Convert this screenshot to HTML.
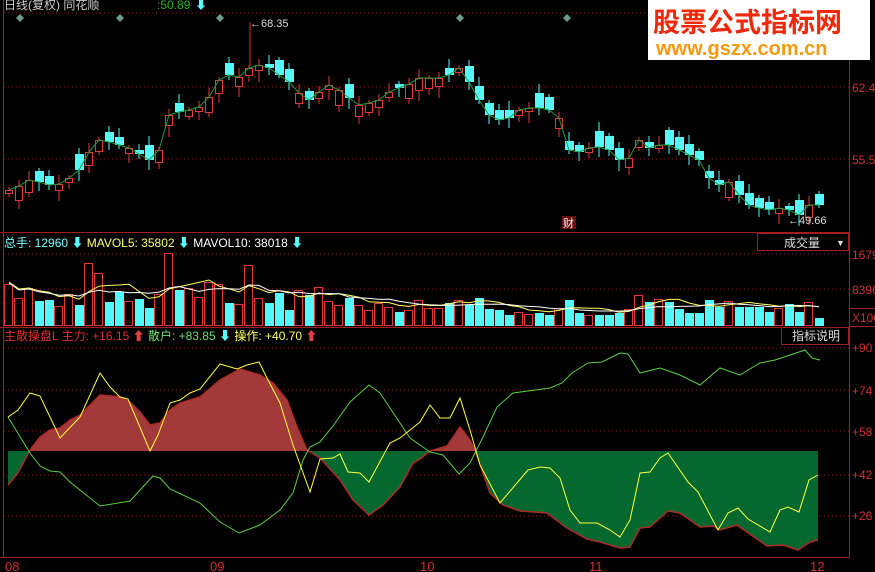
<!DOCTYPE html>
<html><head><meta charset="utf-8"><style>
html,body{margin:0;padding:0;background:#000;width:875px;height:572px;overflow:hidden}
svg{display:block}
text{font-family:"Liberation Sans","Noto Sans CJK SC",sans-serif}
</style></head><body>
<svg id="s" width="875" height="572" viewBox="0 0 875 572" xmlns="http://www.w3.org/2000/svg">
<defs>
<clipPath id="up"><rect x="0" y="300" width="849" height="151"/></clipPath>
<clipPath id="dn"><rect x="0" y="451" width="849" height="110"/></clipPath>
</defs>
<g id="grid" stroke="#8a1a1a" stroke-dasharray="1,3" stroke-width="1">
<line x1="4" y1="13" x2="849" y2="13"/>
<line x1="4" y1="87" x2="849" y2="87"/>
<line x1="4" y1="159" x2="849" y2="159"/>
<line x1="4" y1="254" x2="849" y2="254"/>
<line x1="4" y1="289" x2="849" y2="289"/>
<line x1="4" y1="348" x2="849" y2="348"/>
<line x1="4" y1="390" x2="849" y2="390"/>
<line x1="4" y1="431" x2="849" y2="431"/>
<line x1="4" y1="475" x2="849" y2="475"/>
<line x1="4" y1="516" x2="849" y2="516"/>
</g>
<g stroke="#a01e1e" stroke-width="1" fill="none">
<line x1="849.5" y1="0" x2="849.5" y2="558"/>
<line x1="3.5" y1="0" x2="3.5" y2="558"/>
<line x1="0" y1="232.5" x2="849" y2="232.5"/>
<line x1="0" y1="327.5" x2="849" y2="327.5"/>
<line x1="0" y1="557.5" x2="849" y2="557.5"/>
<rect x="757.5" y="233.5" width="91" height="17"/>
<rect x="781.5" y="327.5" width="67" height="17"/>
<rect x="849.5" y="308.5" width="30" height="18"/>
</g>
<g fill="#6a9a8a"><path d="M20 14l4 4-4 4-4-4z"/><path d="M120 14l4 4-4 4-4-4z"/><path d="M220 14l4 4-4 4-4-4z"/><path d="M460 14l4 4-4 4-4-4z"/><path d="M567 14l4 4-4 4-4-4z"/></g>
<g id="candles"></g>
<g id="vol"></g>
<g id="ind"></g>
<line x1="250" y1="22" x2="250" y2="66" stroke="#d03030"/>
<text x="250" y="27" fill="#ddd" font-size="11">←68.35</text>
<text x="788" y="224" fill="#ddd" font-size="11">←49.66</text>
<rect x="562" y="216" width="14" height="13" fill="#6a1010"/><text x="563" y="227" fill="#eee" font-size="11">财</text>
<text x="4" y="9" fill="#ccc" font-size="12">日线(复权) 同花顺</text>
<text x="157" y="9" fill="#2bb52b" font-size="12">:50.89</text><text x="195" y="9" fill="#5ff" font-size="12">⬇</text>
<rect x="648" y="0" width="222" height="60" fill="#fff"/>
<text x="653" y="32" fill="#f0280a" font-size="27" font-weight="bold" font-family="Noto Sans CJK SC,sans-serif">股票公式指标网</text>
<text x="656" y="55" fill="#f39a10" font-size="20" font-weight="bold">www.gszx.com.cn</text>
<g font-size="12" fill="#d03030">
<text x="852" y="92">62.4</text><text x="852" y="164">55.5</text>
<text x="852" y="259">1679</text><text x="852" y="294">8396</text><text x="852" y="322">X100</text>
<text x="852" y="352">+90</text><text x="852" y="395">+74</text><text x="852" y="436">+58</text><text x="852" y="479">+42</text><text x="852" y="520">+26</text>
<text x="5" y="571" font-size="13">08</text><text x="210" y="571" font-size="13">09</text><text x="420" y="571" font-size="13">10</text><text x="589" y="571" font-size="13">11</text><text x="810" y="571" font-size="13">12</text>
</g>
<text x="4" y="247" font-size="12"><tspan fill="#7ff">总手: 12960</tspan><tspan fill="#5ff"> ⬇ </tspan><tspan fill="#ffff70"> MAVOL5: 35802</tspan><tspan fill="#5ff"> ⬇ </tspan><tspan fill="#fff"> MAVOL10: 38018</tspan><tspan fill="#5ff"> ⬇</tspan></text>
<text x="784" y="247" fill="#ddd" font-size="12">成交量</text><text x="836" y="246" fill="#ddd" font-size="9">▼</text>
<text x="4" y="340" font-size="12"><tspan fill="#e03030">主散操盘L 主力: +16.15</tspan><tspan fill="#e04040"> ⬆ </tspan><tspan fill="#70e070"> 散户: +83.85</tspan><tspan fill="#5ff"> ⬇ </tspan><tspan fill="#ffff60"> 操作: +40.70</tspan><tspan fill="#e04040"> ⬆</tspan></text>
<text x="792" y="340" fill="#ddd" font-size="12">指标说明</text>
</svg>
<script>
var NS="http://www.w3.org/2000/svg";
function el(p,t,a){var e=document.createElementNS(NS,t);for(var k in a)e.setAttribute(k,a[k]);p.appendChild(e);return e;}
var c=[190,186,180,182,185,184,178,170,152,140,142,145,148,154,160,150,115,112,110,107,97,80,75,77,68,65,68,75,82,93,100,92,85,90,98,105,103,100,92,88,84,78,78,78,75,68,82,100,115,120,118,110,108,108,110,118,150,152,148,147,150,160,158,140,148,145,145,150,155,160,178,185,182,195,205,208,210,208,210,215,205,205];
var v=[284,298,288,301,300,306,294,305,263,273,302,292,301,299,308,294,253,290,288,297,282,284,303,304,265,298,303,293,310,290,295,287,301,305,298,305,310,303,307,312,310,300,308,308,303,300,305,298,309,310,315,312,314,313,315,308,300,313,315,315,315,313,309,295,302,299,302,309,313,313,300,307,301,307,307,307,312,308,304,312,302,318];
var pat="RRRCCRRCRRCCRCCRRCRRRRCRRRCCCRCRRRCRRRRCRRRRCRCCCCCRRCCRCCRCCCRRCRCCCCCCRCCCCRCCRC";
var cg=document.getElementById('candles'),vg=document.getElementById('vol');
var pts=[];
for(var i=0;i<c.length;i++){
 var x=9+10*i, cl=c[i], up=pat[i]=='R';
 var d=4+(i*37)%13; var o=up?cl+d:cl-d;
 var col=up?'#e03a3a':'#54f8f8';
 var t=Math.min(o,cl),b=Math.max(o,cl);
 el(cg,'line',{x1:x,y1:t-3-(i*3)%9,x2:x,y2:b+3+(i*5)%9,stroke:col});
 if(up)el(cg,'rect',{x:x-3.5,y:t+.5,width:7,height:b-t-1,fill:'#000',stroke:col});
 else el(cg,'rect',{x:x-4,y:t,width:9,height:b-t,fill:col});
 pts.push(x+','+cl);
 var vt=v[i];
 if(up)el(vg,'rect',{x:x-4.5,y:vt+.5,width:8,height:325-vt,fill:'none',stroke:'#e03a3a'});
 else el(vg,'rect',{x:x-4,y:vt,width:9,height:326-vt,fill:'#54f8f8'});
}
el(cg,'polyline',{points:pts.join(' '),fill:'none',stroke:'#1f9a3a'});
var m5=[],m10=[];
for(var i=0;i<v.length;i++){var s=0,n=0;for(var j=Math.max(0,i-4);j<=i;j++){s+=v[j];n++;}m5.push((9+10*i)+','+(s/n-2).toFixed(1));s=0;n=0;for(var j=Math.max(0,i-9);j<=i;j++){s+=v[j];n++;}m10.push((9+10*i)+','+(s/n-1).toFixed(1));}
el(vg,'polyline',{points:m5.join(' '),fill:'none',stroke:'#ffff60'});
el(vg,'polyline',{points:m10.join(' '),fill:'none',stroke:'#fff'});
var ig=document.getElementById('ind');
var main="8,485 18,473 30,450 40,437 50,430 60,428 70,420 80,415 100,395 120,397 130,402 140,412 150,425 160,423 170,410 180,403 200,397 220,380 240,369 260,375 273,383 287,400 297,427 307,450 320,458 340,480 353,500 369,515 383,505 400,487 413,463 420,459 430,451 447,446 460,427 470,440 475,450 490,493 503,505 520,511 547,513 567,528 587,539 600,542 620,548 630,547 640,528 650,527 668,511 680,513 700,527 713,526 720,530 737,525 767,546 783,545 798,550 810,542 818,540";
var poly="8,451 "+main+" 818,451";
el(ig,'polygon',{points:poly,fill:'#a33a3a','clip-path':'url(#up)'});
el(ig,'polygon',{points:poly,fill:'#05692f','clip-path':'url(#dn)'});
el(ig,'polyline',{points:main,fill:'none',stroke:'#b02a2a','stroke-width':1.5});
var green="8,417 30,453 40,466 50,471 60,472 70,482 100,506 130,501 153,476 160,478 170,489 200,503 220,522 239,533 260,525 280,510 293,493 303,460 310,447 320,442 333,426 350,402 369,385 380,393 410,438 430,452 443,455 459,474 470,463 483,437 497,407 513,393 550,388 562,383 572,373 588,363 602,362 620,353 628,354 640,373 660,368 680,375 700,385 720,368 740,375 760,363 775,360 790,355 805,350 812,358 820,360";
var yel="8,417 18,410 30,393 40,396 60,438 80,417 100,373 110,387 120,397 128,399 150,451 158,435 170,403 180,400 190,393 200,389 220,364 237,369 247,365 259,362 267,378 280,403 293,445 310,492 320,459 333,458 340,454 348,472 360,473 369,482 390,443 400,438 420,422 430,405 440,418 450,418 460,398 470,430 480,465 500,503 528,470 540,467 550,468 560,478 570,510 580,523 597,523 610,530 620,537 630,520 640,473 650,472 660,458 668,453 688,482 698,492 718,530 728,513 738,508 748,519 770,532 780,510 788,507 799,512 809,480 818,475";
el(ig,'polyline',{points:green,fill:'none',stroke:'#5cd040'});
el(ig,'polyline',{points:yel,fill:'none',stroke:'#ffff40'});
</script>
</body></html>
